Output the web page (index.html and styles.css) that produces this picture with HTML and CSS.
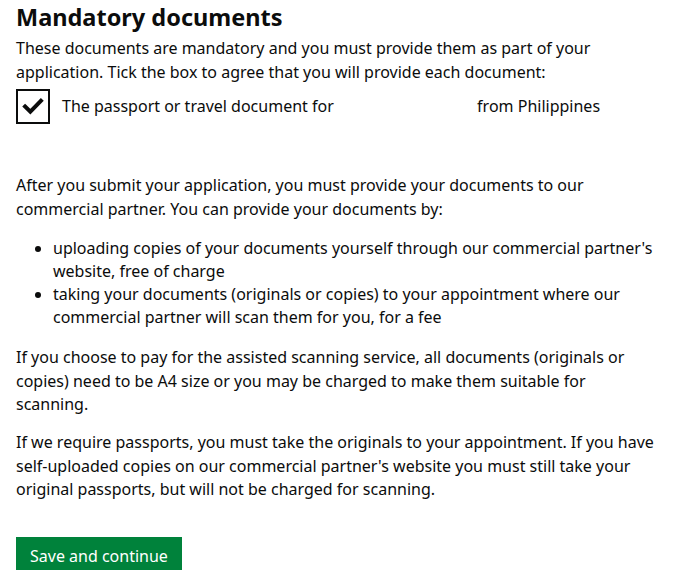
FILE: index.html
```html
<!DOCTYPE html>
<html lang="en">
<head>
<meta charset="utf-8">
<title>Mandatory documents</title>
<link rel="stylesheet" href="styles.css">
</head>
<body>
<main class="page">
  <h1 class="heading">Mandatory documents</h1>
  <p class="body intro">These documents are mandatory and you must provide them as part of your application. Tick the box to agree that you will provide each document:</p>
  <div class="checkbox-item">
    <span class="checkbox">
      <svg viewBox="0 0 34 34" width="34" height="34" aria-hidden="true">
        <path d="M8 17.5 L14 23.5 L26 11" fill="none" stroke="#0b0c0c" stroke-width="4.5" stroke-linecap="square"/>
      </svg>
    </span>
    <label class="checkbox-label">The passport or travel document for <span class="redacted"></span> from Philippines</label>
  </div>
  <p class="body after">After you submit your application, you must provide your documents to our commercial partner. You can provide your documents by:</p>
  <ul class="list">
    <li>uploading copies of your documents yourself through our commercial partner's website, free of charge</li>
    <li>taking your documents (originals or copies) to your appointment where our commercial partner will scan them for you, for a fee</li>
  </ul>
  <p class="body">If you choose to pay for the assisted scanning service, all documents (originals or copies) need to be A4 size or you may be charged to make them suitable for scanning.</p>
  <p class="body">If we require passports, you must take the originals to your appointment. If you have self-uploaded copies on our commercial partner's website you must still take your original passports, but will not be charged for scanning.</p>
  <button class="button" type="submit">Save and continue</button>
</main>
</body>
</html>
```
FILE: styles.css
```css
html, body {
  margin: 0;
  padding: 0;
  background: #ffffff;
}
body {
  font-family: "Noto Sans", "Open Sans", Arial, sans-serif;
  color: #0b0c0c;
}
.page {
  padding: 0 16px;
  width: 640px;
}
.heading {
  margin: 0;
  padding-top: 2px;
  font-size: 23.5px;
  line-height: 30px;
  font-weight: 700;
}
.body {
  margin: 0 0 14.5px;
  font-size: 16px;
  line-height: 23.5px;
}
.intro {
  margin: 5px 0 5px;
  width: 600px;
}
.checkbox-item {
  display: flex;
  align-items: center;
  gap: 12px;
  height: 34px;
}
.checkbox {
  box-sizing: border-box;
  width: 34px;
  height: 35px;
  border: 2px solid #0b0c0c;
  display: flex;
  align-items: center;
  justify-content: center;
}
.checkbox svg {
  width: 30px;
  height: 30px;
}
.checkbox-label {
  font-size: 16px;
  line-height: 24px;
}
.redacted {
  display: inline-block;
  width: 135px;
}
.after {
  margin-top: 51px;
  margin-bottom: 16px;
}
.list {
  margin: 0 0 17px;
  padding-left: 37px;
  font-size: 16px;
  line-height: 23px;
}
.button {
  margin-top: 21px;
  background: #00823b;
  color: #ffffff;
  border: 0;
  font-family: inherit;
  font-size: 16px;
  line-height: 20px;
  padding: 9px 14px 9px;
  cursor: pointer;
}
```
